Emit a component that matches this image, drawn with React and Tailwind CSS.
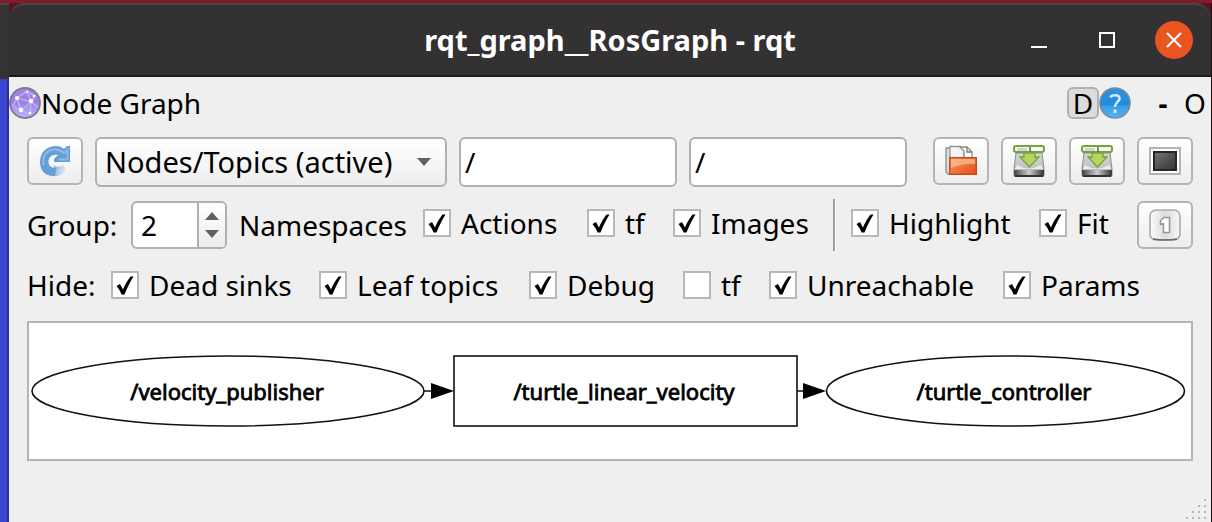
import React from "react";

function Check({ label, checked = true, className = "" }) {
  return (
    <label className={`flex h-7 shrink-0 items-center gap-2.5 whitespace-nowrap ${className}`}>
      <span className="grid size-7 shrink-0">
        <input
          type="checkbox"
          defaultChecked={checked}
          className="peer col-start-1 row-start-1 size-7 appearance-none border-2 border-[#b8b8b8] bg-white"
        />
        <svg viewBox="0 0 28 28" className="pointer-events-none invisible col-start-1 row-start-1 size-7 peer-checked:visible" aria-hidden="true">
          <path d="M5.500 15 9 13 12 18.500C14 13 17 9 19.500 5.500H22.500C19 11 16 17 13.500 23.500H10.500C9.500 20.500 7.500 17.500 5.500 15Z" fill="#000" />
        </svg>
      </span>
      <span>{label}</span>
    </label>
  );
}

function ToolButton({ label, children }) {
  return (
    <button
      type="button"
      aria-label={label}
      className="flex h-12 w-14 shrink-0 items-center justify-center rounded-md border-2 border-[#b4b4b4] bg-linear-to-b from-white to-[#ededed]"
    >
      {children}
    </button>
  );
}

function NodeGraphIcon() {
  return (
    <svg viewBox="0 0 32 32" className="size-8 shrink-0" aria-hidden="true">
      <defs>
        <linearGradient id="orb" x1="0" y1="0" x2="0" y2="1">
          <stop offset="0" stopColor="#a884e0" />
          <stop offset="0.45" stopColor="#9a7ee2" />
          <stop offset="1" stopColor="#b9b6fa" />
        </linearGradient>
      </defs>
      <circle cx="16" cy="16" r="15" fill="url(#orb)" stroke="#82798f" strokeWidth="1.8" />
      <path d="M8 11 18 4 26 9 22 15 8 11 4 19 12 24 22 15 29 20M12 24 21 27 22 15M8 11 12 24M18 4 22 15" fill="none" stroke="#c4b4f2" strokeWidth="1.6" opacity="0.8" />
      <g fill="#fff">
        <circle cx="8" cy="11" r="2" />
        <circle cx="22" cy="14" r="2.2" />
        <circle cx="12" cy="23" r="2.2" />
        <circle cx="25" cy="9" r="1.3" />
        <circle cx="21" cy="26" r="1.3" />
        <circle cx="18" cy="5" r="1" />
      </g>
    </svg>
  );
}

function HelpIcon() {
  return (
    <svg viewBox="0 0 32 32" className="size-8" aria-hidden="true">
      <defs>
        <linearGradient id="help" x1="0" y1="0" x2="0" y2="1">
          <stop offset="0" stopColor="#2f93e0" />
          <stop offset="0.55" stopColor="#2489dc" />
          <stop offset="0.6" stopColor="#3b9ce4" />
          <stop offset="1" stopColor="#55b4ee" />
        </linearGradient>
      </defs>
      <circle cx="16" cy="16" r="15" fill="url(#help)" stroke="#6f8ea8" strokeWidth="1.6" />
      <path d="M11.500 10.500C12.500 7.500 20.500 7 20.500 11.500 20.500 15 16 15 16 20" fill="none" stroke="#cfeaff" strokeWidth="2.600" />
      <rect x="14.500" y="22.500" width="3" height="3.500" fill="#cfeaff" />
    </svg>
  );
}

function RefreshIcon() {
  return (
    <svg viewBox="0 0 32 32" className="size-8" aria-hidden="true">
      <defs>
        <linearGradient id="fade" gradientUnits="userSpaceOnUse" x1="14" y1="22" x2="28" y2="26">
          <stop offset="0" stopColor="#6da4d8" />
          <stop offset="1" stopColor="#b9d4ec" stopOpacity="0.2" />
        </linearGradient>
      </defs>
      <path d="M15 20.500C19 23 22 21 25 20L27 26C22 31 17 31.500 14 31Z" fill="url(#fade)" />
      <path d="M16 31C7 32 1 26 1 17 1 6 9 1 17 1 20 1 23 2 25 4L28 1H31V17H15V14L19 10C13 9 9.500 12 9.500 17 9.500 21 13 23 17 23Z" fill="#659fd5" />
      <path d="M4.500 20C3 11 8 4.500 16 4.500 20 4.500 22 5.500 25 8L28.500 5V14.500H20" fill="none" stroke="#8fbae1" strokeWidth="2" />
    </svg>
  );
}

function FolderIcon() {
  return (
    <svg viewBox="0 0 32 32" className="size-8" aria-hidden="true">
      <defs>
        <linearGradient id="folder" x1="0" y1="0" x2="1" y2="1">
          <stop offset="0" stopColor="#f0a070" />
          <stop offset="0.4" stopColor="#ee7d45" />
          <stop offset="1" stopColor="#e24d18" />
        </linearGradient>
      </defs>
      <path d="M1 3H6V29H3L1 27Z" fill="#ddd" stroke="#8c8c8c" strokeWidth="1.300" />
      <path d="M5 1.500H15L19 5.500V14H5Z" fill="#f4f4f4" stroke="#999" strokeWidth="1.300" />
      <path d="M15 2H22L27 7V14H19V6Z" fill="#fff" stroke="#8c8c8c" strokeWidth="1.300" />
      <path d="M22 2V7H27" fill="none" stroke="#777" strokeWidth="1.300" />
      <rect x="4.700" y="12.700" width="26.600" height="16.600" fill="url(#folder)" stroke="#cf4716" strokeWidth="1.400" />
      <path d="M6 14H30V19C22 18 14 20 6 23Z" fill="#f7c09c" opacity="0.7" />
    </svg>
  );
}

function SaveIcon() {
  return (
    <svg viewBox="0 0 32 32" className="size-8" aria-hidden="true">
      <defs>
        <linearGradient id="disk" x1="0" y1="0" x2="0" y2="1">
          <stop offset="0" stopColor="#d7d7d7" />
          <stop offset="1" stopColor="#b4b4b4" />
        </linearGradient>
        <linearGradient id="diskbase" x1="0" y1="0" x2="1" y2="0">
          <stop offset="0" stopColor="#444" />
          <stop offset="0.5" stopColor="#ccc" />
          <stop offset="1" stopColor="#333" />
        </linearGradient>
      </defs>
      <path d="M3 8H29L31 24V30Q31 32 29 32H3Q1 32 1 30V24Z" fill="url(#disk)" stroke="#8c8c8c" strokeWidth="1" />
      <path d="M4 20Q16 27 28 20L30 24H2Z" fill="#ececec" />
      <path d="M1 25H31V29Q31 32 28 32H4Q1 32 1 29Z" fill="url(#diskbase)" />
      <path d="M2 31H30" stroke="#333" strokeWidth="2" />
      <rect x="1" y="1" width="30" height="6" rx="2" fill="#f6f9f1" stroke="#75a33c" strokeWidth="2" />
      <path d="M4 3H14V6H4Z" fill="#d2d5ce" />
      <path d="M17 2V7" stroke="#666" strokeWidth="1.500" />
      <path d="M11 8H22V12H26L16.500 22 7 12H11Z" fill="#b5d560" stroke="#75a33c" strokeWidth="1.300" />
    </svg>
  );
}

function ImageIcon() {
  return (
    <svg viewBox="0 0 32 32" className="size-8" aria-hidden="true">
      <defs>
        <linearGradient id="screen" x1="0" y1="0" x2="1" y2="1">
          <stop offset="0" stopColor="#777" />
          <stop offset="1" stopColor="#303030" />
        </linearGradient>
      </defs>
      <rect x="1" y="3" width="30" height="26" fill="#fff" stroke="#b3b3b3" strokeWidth="2" />
      <rect x="5" y="7" width="22" height="18" fill="url(#screen)" stroke="#252525" strokeWidth="2" />
    </svg>
  );
}

function OneIcon() {
  return (
    <svg viewBox="0 0 32 32" className="size-8" aria-hidden="true">
      <defs>
        <linearGradient id="one" x1="0" y1="0" x2="1" y2="0">
          <stop offset="0" stopColor="#fbfbfb" />
          <stop offset="0.5" stopColor="#dcdcdc" />
          <stop offset="1" stopColor="#f8f8f8" />
        </linearGradient>
      </defs>
      <rect x="1" y="1" width="30" height="30" rx="6" fill="url(#one)" stroke="#aaa" strokeWidth="1.600" />
      <path d="M4 30Q16 32 28 30" fill="none" stroke="#666" strokeWidth="1.600" />
      <path d="M11.500 11.500 15 8.500H20.500V23.500H14.500V14.500L11.500 15.500Z" fill="#fff" stroke="#959595" strokeWidth="1.500" />
    </svg>
  );
}

function TitleBar() {
  return (
    <header className="grid h-[74px] grid-cols-[1fr_auto_1fr] items-center rounded-t-2xl border-t-2 border-b-2 border-t-[#484745] border-b-[#1f1b1b] bg-[#333132] text-white">
      <span />
      <h1 className="text-[29px] font-bold whitespace-nowrap">rqt_graph__RosGraph - rqt</h1>
      <div className="flex items-center justify-end pr-[18px]">
        <button type="button" aria-label="Minimize" className="mr-[52px] flex size-4 items-end">
          <span className="h-0.5 w-4 bg-white" />
        </button>
        <button type="button" aria-label="Maximize" className="mr-10 size-4 border-2 border-white" />
        <button type="button" aria-label="Close" className="flex size-[38px] items-center justify-center rounded-full bg-[#e95420]">
          <svg viewBox="0 0 16 16" className="size-4" aria-hidden="true">
            <path d="M1 1 15 15M15 1 1 15" stroke="#fff" strokeWidth="2.200" />
          </svg>
        </button>
      </div>
    </header>
  );
}

function Graph() {
  return (
    <svg viewBox="0 0 1162 136" className="h-[136px] w-full" role="img" aria-label="Node graph">
      <g fill="none" stroke="#111" strokeWidth="1.600">
        <ellipse cx="199" cy="68" rx="196" ry="35" />
        <rect x="425" y="33" width="343" height="70" />
        <ellipse cx="976.500" cy="68" rx="179" ry="35" />
        <path d="M395 68H405M768 68H777" />
      </g>
      <path d="M402 60 425 68 402 76ZM774 60 797 68 774 76Z" fill="#000" />
      <g className="font-['Noto_Sans']" fontSize="22" textAnchor="middle" fill="#000" stroke="#000" strokeWidth="0.8">
        <text x="198" y="77">/velocity_publisher</text>
        <text x="595" y="77">/turtle_linear_velocity</text>
        <text x="975" y="77">/turtle_controller</text>
      </g>
    </svg>
  );
}

const gripRows = [1, 2, 3, 4];

export default function App() {
  return (
    <div className="flex min-h-screen flex-col bg-[#7f1b2d] pt-[3px] font-['Noto_Sans',sans-serif] text-[28px] leading-8 text-black">
      <div className="flex flex-1 bg-[#250a1c]">
        <aside className="flex w-[9px] shrink-0 flex-col bg-[#3945ce]">
          <div className="h-[76px] border-t-2 border-[#4a4846] bg-[#353332]" />
          <div className="flex-1 border-r-2 border-[#27309b]" />
        </aside>
        <main className="mr-px flex min-w-0 flex-1 flex-col bg-[#efefef]">
          <div className="bg-[#571520]">
            <TitleBar />
          </div>

          <div className="flex h-[60px] items-start pt-2.5">
            <NodeGraphIcon />
            <h2>Node Graph</h2>
            <div className="ml-auto flex pr-1">
              <button type="button" className="size-8 rounded-md border-2 border-[#b0b0b0] bg-[#dcdcdc] leading-7">D</button>
              <button type="button" aria-label="Help" className="mr-6 size-8"><HelpIcon /></button>
              <button type="button" className="mr-3 w-4 font-bold">-</button>
              <button type="button" className="w-6">O</button>
            </div>
          </div>

          <div className="flex flex-col px-[18px]">
            <div className="flex items-start gap-3">
              <ToolButton label="Refresh"><RefreshIcon /></ToolButton>
              <div className="grid w-[352px] shrink-0 items-center">
                <select aria-label="Graph type" className="col-start-1 row-start-1 h-[50px] appearance-none rounded-md border-2 border-[#b0b0b0] bg-linear-to-b from-white to-[#ededed] pl-2 text-[29px]">
                  <option>Nodes/Topics (active)</option>
                </select>
                <svg viewBox="0 0 14 8" className="pointer-events-none col-start-1 row-start-1 mr-4 h-2 w-3.5 justify-self-end" aria-hidden="true">
                  <path d="M0 0H14L7 8Z" fill="#606060" />
                </svg>
              </div>
              <input aria-label="Node filter" defaultValue="/" className="h-[50px] min-w-0 flex-1 rounded-md border-2 border-[#b0b0b0] bg-white pl-1" />
              <input aria-label="Topic filter" defaultValue="/" className="h-[50px] min-w-0 flex-1 rounded-md border-2 border-[#b0b0b0] bg-white pl-1" />
              <div className="ml-3.5 flex gap-3">
                <ToolButton label="Load"><FolderIcon /></ToolButton>
                <ToolButton label="Save as DOT"><SaveIcon /></ToolButton>
                <ToolButton label="Save as SVG"><SaveIcon /></ToolButton>
                <ToolButton label="Save as image"><ImageIcon /></ToolButton>
              </div>
            </div>

            <div className="mt-3 flex h-[52px] items-center">
              <label htmlFor="group" className="w-[104px] shrink-0">Group:</label>
              <div className="flex h-12 w-24 shrink-0 overflow-hidden rounded-md border-2 border-[#b0b0b0] bg-white">
                <input id="group" defaultValue="2" inputMode="numeric" className="min-w-0 flex-1 pl-2" />
                <div className="flex w-7 shrink-0 flex-col border-l-2 border-[#b0b0b0] bg-linear-to-b from-white to-[#ededed]">
                  <button type="button" aria-label="Increase" className="flex flex-1 items-end justify-center pb-1">
                    <svg viewBox="0 0 14 8" className="h-2 w-3.5"><path d="M0 8H14L7 0Z" fill="#606060" /></svg>
                  </button>
                  <button type="button" aria-label="Decrease" className="flex flex-1 items-start justify-center pt-1.5">
                    <svg viewBox="0 0 14 8" className="h-2 w-3.5"><path d="M0 0H14L7 8Z" fill="#606060" /></svg>
                  </button>
                </div>
              </div>
              <span className="w-[196px] shrink-0 pl-3">Namespaces</span>
              <div className="flex h-full items-center pb-1">
                <Check label="Actions" className="w-[164px]" />
                <Check label="tf" className="w-[86px]" />
                <Check label="Images" className="w-[160px]" />
              </div>
              <div className="h-full w-[3px] shrink-0 border-l-2 border-[#a0a0a0] bg-white" />
              <div className="ml-[15px] flex h-full items-center pb-1">
                <Check label="Highlight" className="w-[188px]" />
                <Check label="Fit" className="w-[98px]" />
              </div>
              <div className="ml-auto">
                <ToolButton label="Fit to view"><OneIcon /></ToolButton>
              </div>
            </div>

            <div className="mt-5 flex h-7 items-center">
              <span className="w-[84px] shrink-0">Hide:</span>
              <Check label="Dead sinks" className="w-[208px]" />
              <Check label="Leaf topics" className="w-[210px]" />
              <Check label="Debug" className="w-[154px]" />
              <Check label="tf" checked={false} className="w-[86px]" />
              <Check label="Unreachable" className="w-[234px]" />
              <Check label="Params" />
            </div>

            <section className="mt-[22px] border-2 border-[#b5b5b5] bg-white">
              <Graph />
            </section>
          </div>

          <div className="mt-auto flex justify-end pr-1">
            <svg viewBox="0 0 24 24" className="size-6" aria-hidden="true">
              {gripRows.map((row) =>
                gripRows.slice(4 - row).map((col) => (
                  <rect key={`${row}-${col}`} x={col * 6 - 3} y={row * 6 - 5} width="2" height="2" fill="#b8b8b8" />
                ))
              )}
            </svg>
          </div>
        </main>
      </div>
    </div>
  );
}
